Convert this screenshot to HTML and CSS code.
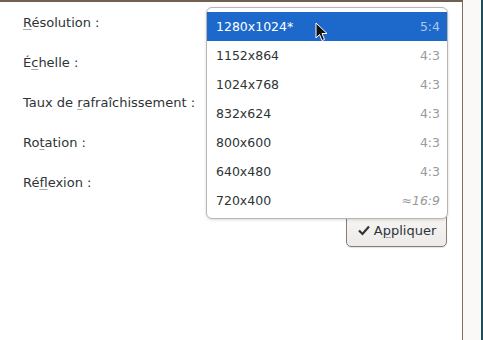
FILE: index.html
```html
<!DOCTYPE html>
<html lang="fr">
<head>
    <meta charset="UTF-8">
    <title>Affichage</title>
    <link rel="stylesheet" href="styles.css">
</head>
<body>
    <div class="screen">
        <div class="window">
            <div class="settings">
                <div class="row"><span class="label"><u>R</u>ésolution :</span></div>
                <div class="row"><span class="label">É<u>c</u>helle :</span></div>
                <div class="row"><span class="label">Taux de <u>r</u>afraîchissement :</span></div>
                <div class="row"><span class="label">Ro<u>t</u>ation :</span></div>
                <div class="row"><span class="label">Ré<u>f</u>lexion :</span></div>
            </div>

            <div class="actions">
                <button class="btn-apply">
                    <svg class="check" width="12" height="11" viewBox="0 0 12 11">
                        <path d="M1 5.5 L4.5 9 L11 1.5" fill="none" stroke="#2e3436" stroke-width="2.2"/>
                    </svg>
                    <span>A<u>p</u>pliquer</span>
                </button>
            </div>

            <!-- open resolution dropdown -->
            <ul class="menu">
                <li class="selected"><span>1280x1024*</span><span class="ratio">5:4</span></li>
                <li><span>1152x864</span><span class="ratio">4:3</span></li>
                <li><span>1024x768</span><span class="ratio">4:3</span></li>
                <li><span>832x624</span><span class="ratio">4:3</span></li>
                <li><span>800x600</span><span class="ratio">4:3</span></li>
                <li><span>640x480</span><span class="ratio">4:3</span></li>
                <li><span>720x400</span><span class="ratio approx">≈16:9</span></li>
            </ul>

            <svg class="cursor" width="14" height="20" viewBox="0 0 14 20">
                <path d="M1 1 L1 16 L4.5 12.5 L7 18.5 L9.5 17.5 L7 11.5 L12 11.5 Z" fill="#111" stroke="#fff" stroke-width="1" stroke-linejoin="round"/>
            </svg>
        </div>
        <div class="side"></div>
    </div>
</body>
</html>
```

FILE: styles.css
```css
body {
    margin: 0;
    padding: 0;
    font-family: "DejaVu Sans", sans-serif;
    font-size: 13px;
    color: #2e3436;
    background: #fff;
}

.screen {
    display: flex;
    width: 483px;
    height: 340px;
    overflow: hidden;
}

.window {
    position: relative;
    width: 462px;
    height: 338px;
    border-top: 2px solid #6f6052;
    border-right: 1px solid #7d6d60;
    background: #fff;
}

.side {
    flex: 1;
    background: #faf9f8;
    border-right: 2px solid #1e4f60;
}

.settings {
    padding: 9px 0 0 23px;
}

.row {
    height: 40px;
    line-height: 24px;
}

.label u,
.btn-apply u {
    text-decoration-color: #a9a9a9;
    text-underline-offset: 2px;
}

.actions {
    display: flex;
    justify-content: flex-end;
    padding: 2px 15px 0 0;
}

.btn-apply {
    display: flex;
    align-items: center;
    justify-content: center;
    gap: 4px;
    font-family: inherit;
    font-size: 13px;
    color: #2e3436;
    width: 101px;
    height: 34px;
    padding: 0 0 0 1px;
    border: 1px solid #8a7d72;
    border-radius: 5px;
    background: linear-gradient(#f7f6f5, #ecebe9);
    box-shadow: 0 1px 1px rgba(0, 0, 0, 0.12);
}

.check {
    margin-top: 1px;
}

.menu {
    position: absolute;
    left: 206px;
    top: 5px;
    width: 240px;
    margin: 0;
    padding: 4px 0 3px;
    list-style: none;
    font-size: 12.5px;
    background: #fff;
    border: 1px solid #b9b6b2;
    border-radius: 6px;
    box-shadow: 0 1px 3px rgba(0, 0, 0, 0.15);
}

.menu li {
    display: flex;
    justify-content: space-between;
    align-items: center;
    height: 29px;
    padding: 0 7px 0 9px;
    color: #2e3436;
}

.menu li.selected {
    background: #1d69cb;
    color: #fff;
}

.ratio {
    color: #9a9a9a;
}

.selected .ratio {
    color: #aac6ec;
}

.approx {
    font-style: italic;
}

.cursor {
    position: absolute;
    left: 315px;
    top: 20px;
}
```
